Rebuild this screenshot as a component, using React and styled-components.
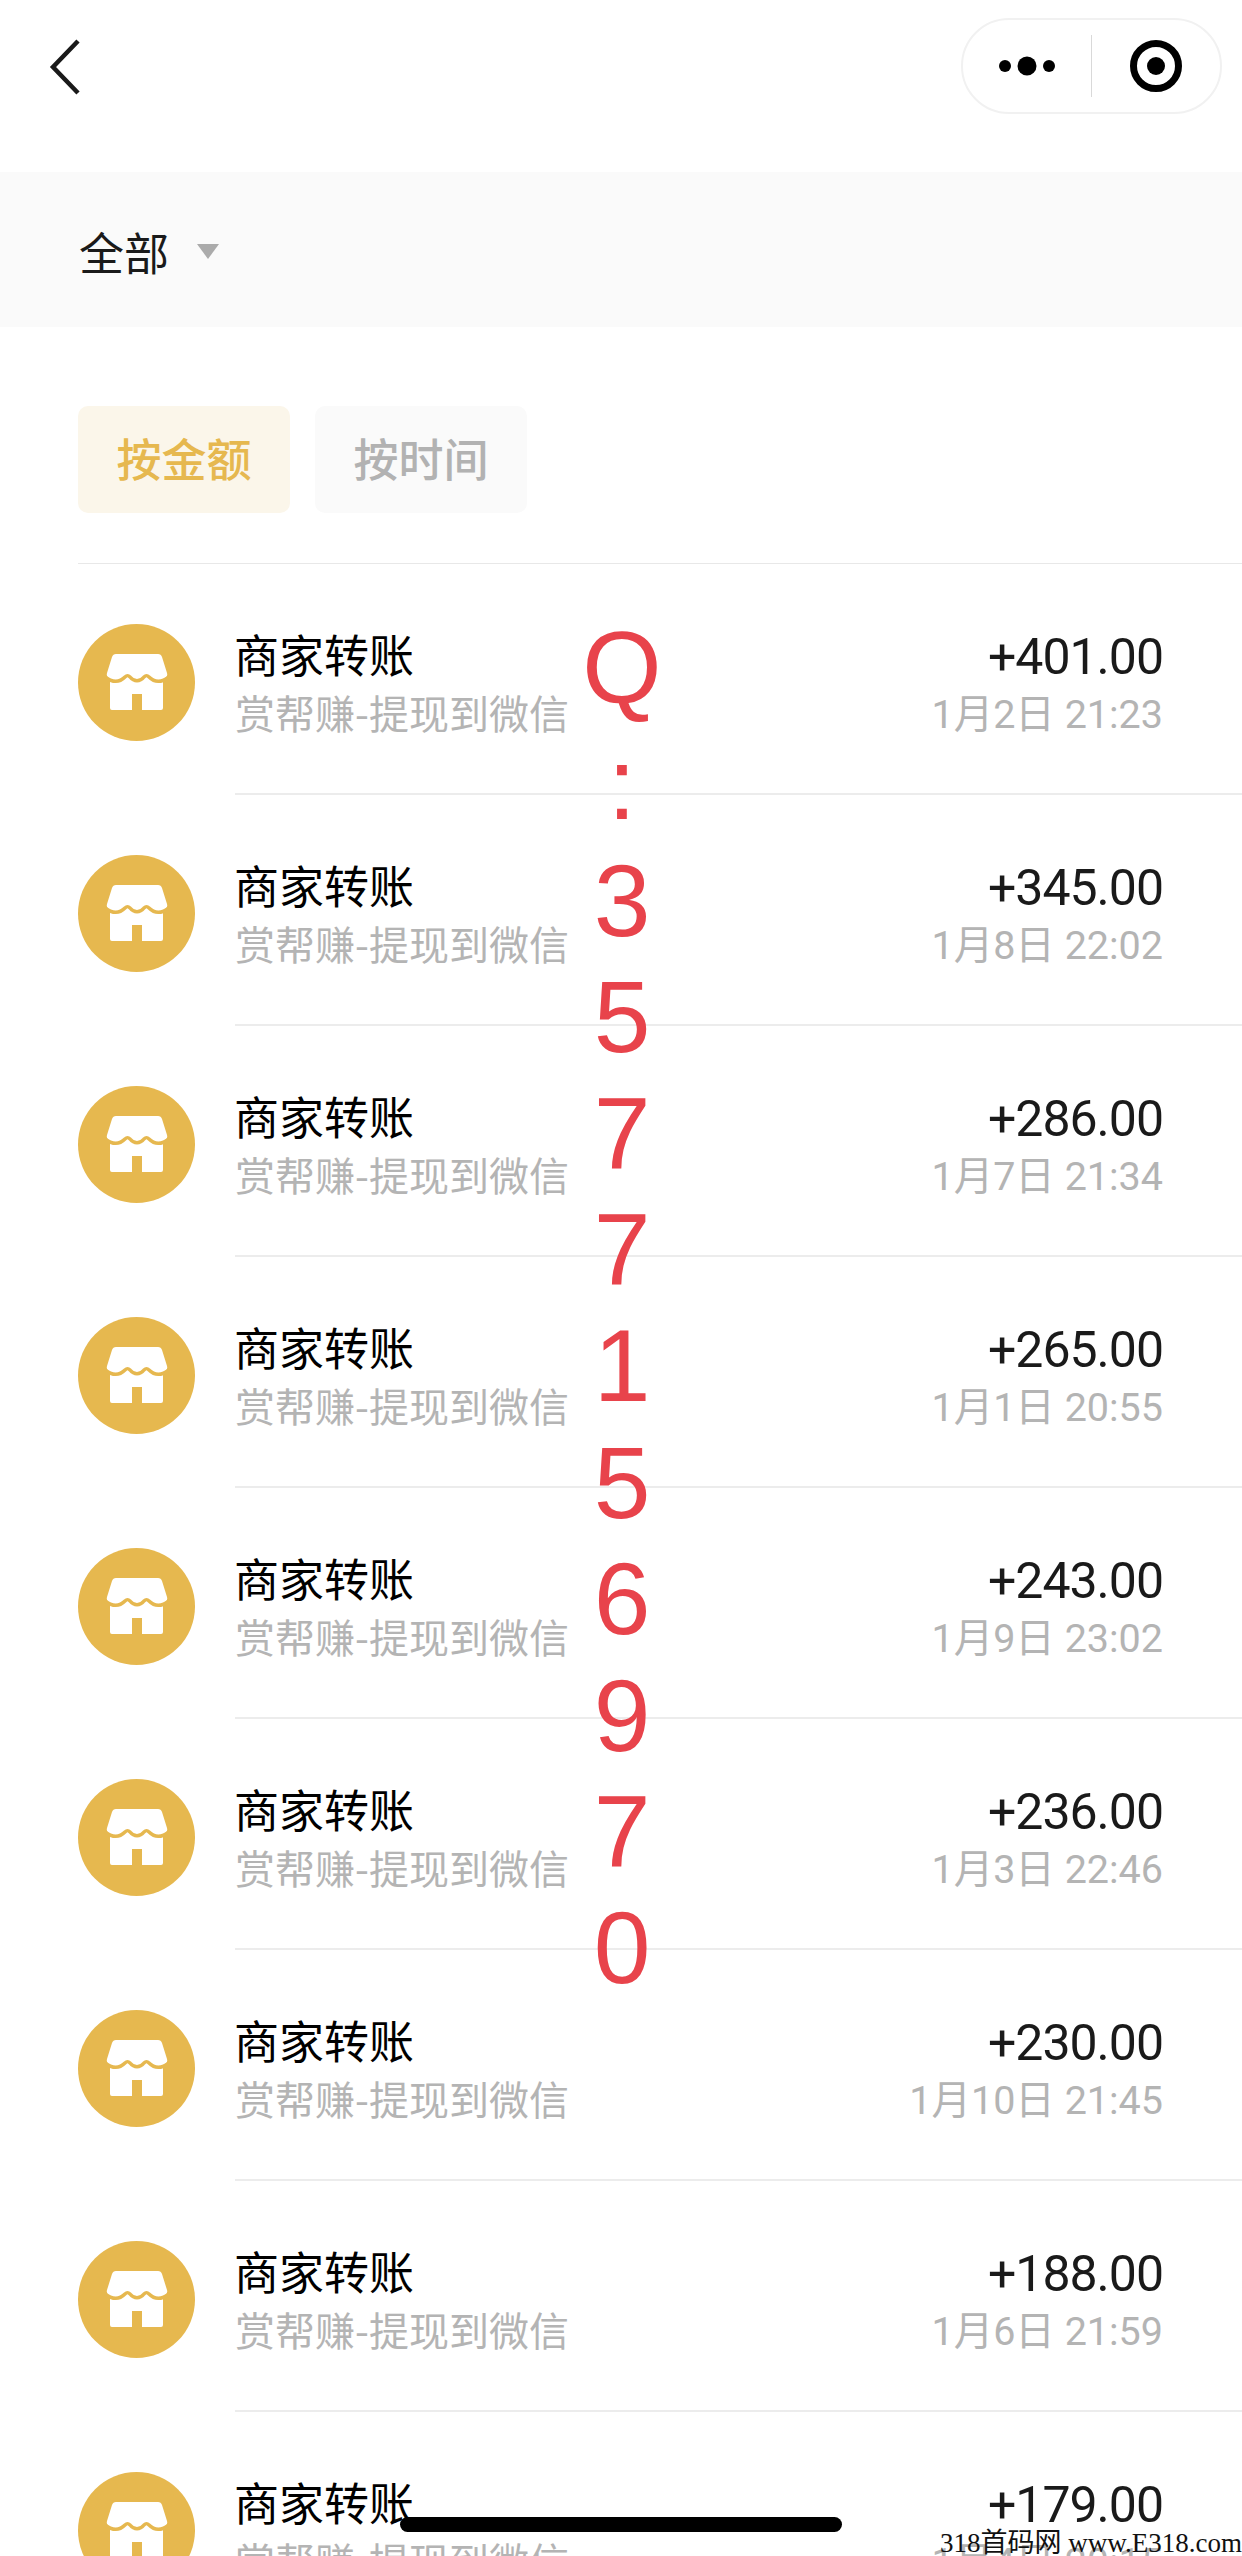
import React from "react";
import styled, { createGlobalStyle } from "styled-components";

const GlobalStyle = createGlobalStyle`
  html, body {
    margin: 0;
    padding: 0;
    background: #fff;
  }
`;

const Page = styled.div`
  position: relative;
  width: 1242px;
  height: 2556px;
  overflow: hidden;
  background: #fff;
  font-family: "Roboto", "Noto Sans CJK SC", sans-serif;
`;

const NavBar = styled.div`
  height: 172px;
  display: flex;
  justify-content: space-between;
  align-items: flex-start;
  padding: 18px 20px 0 48px;
  box-sizing: border-box;
`;

const BackButton = styled.svg`
  width: 34px;
  height: 58px;
  margin-top: 20px;
`;

const Capsule = styled.div`
  width: 261px;
  height: 96px;
  box-sizing: border-box;
  border: 2px solid #f1f1f1;
  border-radius: 48px;
  display: flex;
  align-items: center;
`;

const CapsuleSide = styled.div`
  flex: 1;
  height: 100%;
  display: flex;
  align-items: center;
  justify-content: center;
`;

const CapsuleDivider = styled.div`
  width: 1px;
  height: 62px;
  background: #d9d9d9;
`;

const FilterBar = styled.div`
  height: 155px;
  background: #fafafa;
  display: flex;
  align-items: center;
  padding-left: 79px;
  gap: 28px;
`;

const FilterLabel = styled.span`
  font-size: 45px;
  line-height: 60px;
  margin-top: 5px;
  color: #1a1a1a;
  font-family: "Noto Sans CJK SC", sans-serif;
  font-weight: 400;
`;

const Caret = styled.span`
  width: 0;
  height: 0;
  margin-top: 4px;
  border-left: 11px solid transparent;
  border-right: 11px solid transparent;
  border-top: 15px solid #ababab;
`;

const Tabs = styled.div`
  display: flex;
  gap: 25px;
  padding: 79px 0 50px 78px;
`;

const Tab = styled.div`
  width: 212px;
  height: 107px;
  padding-bottom: 5px;
  box-sizing: border-box;
  border-radius: 10px;
  display: flex;
  align-items: center;
  justify-content: center;
  font-size: 45px;
  font-weight: 500;
  font-family: "Noto Sans CJK SC", sans-serif;
  background: ${(p) => (p.$active ? "#fbf6ea" : "#fafafa")};
  color: ${(p) => (p.$active ? "#e6b84f" : "#b2b2b2")};
`;

const List = styled.div`
  margin-left: 78px;
  border-top: 1px solid #e8e8e8;
`;

const Row = styled.div`
  display: flex;
  height: 231px;
  box-sizing: border-box;
`;

const StoreBadge = styled.svg`
  width: 117px;
  height: 117px;
  margin: 60px 40px 0 0;
  flex-shrink: 0;
`;

const RowBody = styled.div`
  flex: 1;
  display: flex;
  justify-content: space-between;
  padding: 60px 79px 0 0;
  border-bottom: 2px solid #ececec;
`;

const Column = styled.div`
  display: flex;
  flex-direction: column;
  align-items: ${(p) => (p.$right ? "flex-end" : "flex-start")};
`;

const Title = styled.div`
  font-family: "Noto Sans CJK SC", sans-serif;
  font-size: 45px;
  line-height: 60px;
  margin-left: -1px;
  color: #000;
`;

const Subtitle = styled.div`
  font-family: "Noto Sans CJK SC", sans-serif;
  font-size: 40px;
  line-height: 58px;
  margin-top: -1px;
  color: #b4b4b4;
`;

const Amount = styled.div`
  font-size: 50px;
  line-height: 60px;
  margin-top: 3px;
  color: #1a1a1a;
  letter-spacing: -1px;
`;

const DateText = styled.div`
  font-size: 39.5px;
  line-height: 58px;
  margin-top: -1px;
  color: #b4b4b4;
`;

const QQColumn = styled.div`
  position: absolute;
  left: 562px;
  top: 610px;
  width: 120px;
  display: flex;
  flex-direction: column;
  align-items: center;
  font-family: "Liberation Sans", Arial, sans-serif;
  font-size: 102px;
  line-height: 116.4px;
  color: #e8434b;
`;

const HomeBar = styled.div`
  position: absolute;
  left: 400px;
  top: 2517px;
  width: 442px;
  height: 15px;
  border-radius: 8px;
  background: #000;
`;

const SiteMark = styled.div`
  position: absolute;
  right: 0;
  top: 2526px;
  font-family: "Liberation Serif", "Noto Sans CJK SC", serif;
  font-size: 27px;
  line-height: 34px;
  white-space: pre;
  color: #111;
`;

const StoreIcon = () => (
  <StoreBadge viewBox="0 0 117 117">
    <circle cx="58.5" cy="58.5" r="58.5" fill="#e6b84f" />
    <path
      fill="#fff"
      d="M38 30H80Q83 30 84 33L89 49Q90 52 87 54L84 56H34L31 54Q28 52 29 49L34 33Q35 30 38 30Z"
    />
    <path
      fill="#fff"
      d="M32 52H85V84Q85 86 83 86H64V70H54V86H34Q32 86 32 84Z"
    />
    <path
      fill="none"
      stroke="#e6b84f"
      strokeWidth="3.5"
      d="M27 53C35 59 42 58 47 53C49 51 50 51 52 53C56 58 62 58 66 53C68 51 69 51 71 53C76 58 83 59 91 53"
    />
  </StoreBadge>
);

const records = [
  ["+401.00", "1月2日 21:23"],
  ["+345.00", "1月8日 22:02"],
  ["+286.00", "1月7日 21:34"],
  ["+265.00", "1月1日 20:55"],
  ["+243.00", "1月9日 23:02"],
  ["+236.00", "1月3日 22:46"],
  ["+230.00", "1月10日 21:45"],
  ["+188.00", "1月6日 21:59"],
  ["+179.00", "1月4日 20:15"],
];

const qq = "Q:3577156970".split("");

const App = () => (
  <Page>
    <GlobalStyle />
    <NavBar>
      <BackButton viewBox="0 0 34 58">
        <path d="M30 3L5 29L30 55" fill="none" stroke="#1a1a1a" strokeWidth="4.5" />
      </BackButton>
      <Capsule>
        <CapsuleSide>
          <svg width="72" height="24" viewBox="0 0 72 24">
            <circle cx="14" cy="12" r="6" fill="#000" />
            <circle cx="36" cy="12" r="9.5" fill="#000" />
            <circle cx="58" cy="12" r="6" fill="#000" />
          </svg>
        </CapsuleSide>
        <CapsuleDivider />
        <CapsuleSide>
          <svg width="54" height="54" viewBox="0 0 54 54">
            <circle cx="27" cy="27" r="22.5" fill="none" stroke="#000" strokeWidth="7" />
            <circle cx="27" cy="27" r="9" fill="#000" />
          </svg>
        </CapsuleSide>
      </Capsule>
    </NavBar>

    <FilterBar>
      <FilterLabel>全部</FilterLabel>
      <Caret />
    </FilterBar>

    <Tabs>
      <Tab $active>按金额</Tab>
      <Tab>按时间</Tab>
    </Tabs>

    <List>
      {records.map(([amount, date]) => (
        <Row key={amount}>
          <StoreIcon />
          <RowBody>
            <Column>
              <Title>商家转账</Title>
              <Subtitle>赏帮赚-提现到微信</Subtitle>
            </Column>
            <Column $right>
              <Amount>{amount}</Amount>
              <DateText>{date}</DateText>
            </Column>
          </RowBody>
        </Row>
      ))}
    </List>

    <QQColumn>
      {qq.map((ch, i) => (
        <span key={i}>{ch}</span>
      ))}
    </QQColumn>
    <HomeBar />
    <SiteMark>318首码网 www.E318.com</SiteMark>
  </Page>
);

export default App;
